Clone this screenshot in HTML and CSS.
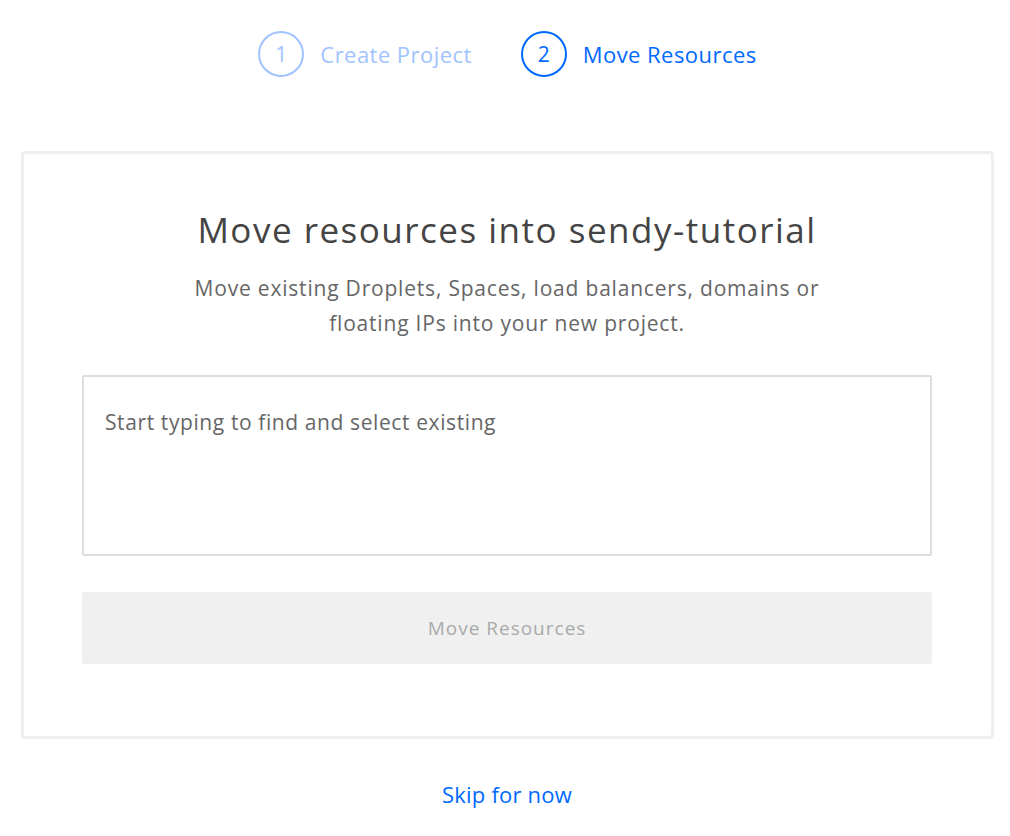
FILE: index.html
```html
<!DOCTYPE html>
<html>
<head>
<meta charset="utf-8">
<link rel="stylesheet" href="styles.css">
</head>
<body>
<div class="page">
  <div class="stepper">
    <div class="step step-done">
      <span class="step-num">1</span>
      <span class="step-label">Create Project</span>
    </div>
    <div class="step step-active">
      <span class="step-num">2</span>
      <span class="step-label">Move Resources</span>
    </div>
  </div>
  <div class="card">
    <h1 class="title">Move resources into sendy-tutorial</h1>
    <p class="subtitle">Move existing Droplets, Spaces, load balancers, domains or<br>floating IPs into your new project.</p>
    <div class="search-box">
      <span class="placeholder">Start typing to find and select existing</span>
    </div>
    <div class="btn-disabled">Move Resources</div>
  </div>
  <div class="skip"><a class="skip-link">Skip for now</a></div>
</div>
</body>
</html>
```

FILE: styles.css
```css
html, body {
  margin: 0;
  padding: 0;
  background: #fff;
}
body {
  font-family: "Open Sans", "Lato", sans-serif;
  color: #444;
}
.page {
  padding: 31px 17px 0 21px;
}
.stepper {
  display: flex;
  justify-content: center;
  gap: 49px;
  padding-left: 1px;
}
.step {
  display: flex;
  align-items: center;
  gap: 16px;
}
.step-num {
  box-sizing: border-box;
  width: 46px;
  height: 46px;
  border-radius: 50%;
  border: 2px solid currentColor;
  display: flex;
  align-items: center;
  justify-content: center;
  font-size: 21px;
  line-height: 1;
}
.step-label {
  font-size: 22px;
  line-height: 28px;
  letter-spacing: 0.45px;
}
.step-done {
  color: #a0c3ff;
}
.step-active {
  color: #0069ff;
}
.card {
  margin-top: 74px;
  box-sizing: border-box;
  width: 973px;
  border: 3px solid #efefef;
  border-radius: 4px;
  padding: 48px 59px 72px 58px;
}
.title {
  margin: 0;
  text-align: center;
  font-weight: 400;
  font-size: 35px;
  line-height: 56px;
  letter-spacing: 1.5px;
  color: #444;
}
.subtitle {
  margin: 13px 0 0;
  text-align: center;
  font-size: 21px;
  line-height: 35px;
  letter-spacing: 0.8px;
  color: #666;
}
.search-box {
  margin-top: 34px;
  box-sizing: border-box;
  height: 181px;
  border: 2px solid #ddd;
  border-radius: 2px;
  padding: 30px 21px;
}
.placeholder {
  font-size: 21px;
  line-height: 30px;
  letter-spacing: 0.6px;
  color: #666;
}
.btn-disabled {
  margin-top: 36px;
  height: 72px;
  background: #f0f0f0;
  border-radius: 3px;
  display: flex;
  align-items: center;
  justify-content: center;
  font-size: 19px;
  letter-spacing: 1px;
  color: #aaa;
}
.skip {
  text-align: center;
  margin-top: 40px;
}
.skip-link {
  font-size: 22px;
  line-height: 30px;
  letter-spacing: 0.2px;
  color: #0069ff;
  cursor: pointer;
}
```
